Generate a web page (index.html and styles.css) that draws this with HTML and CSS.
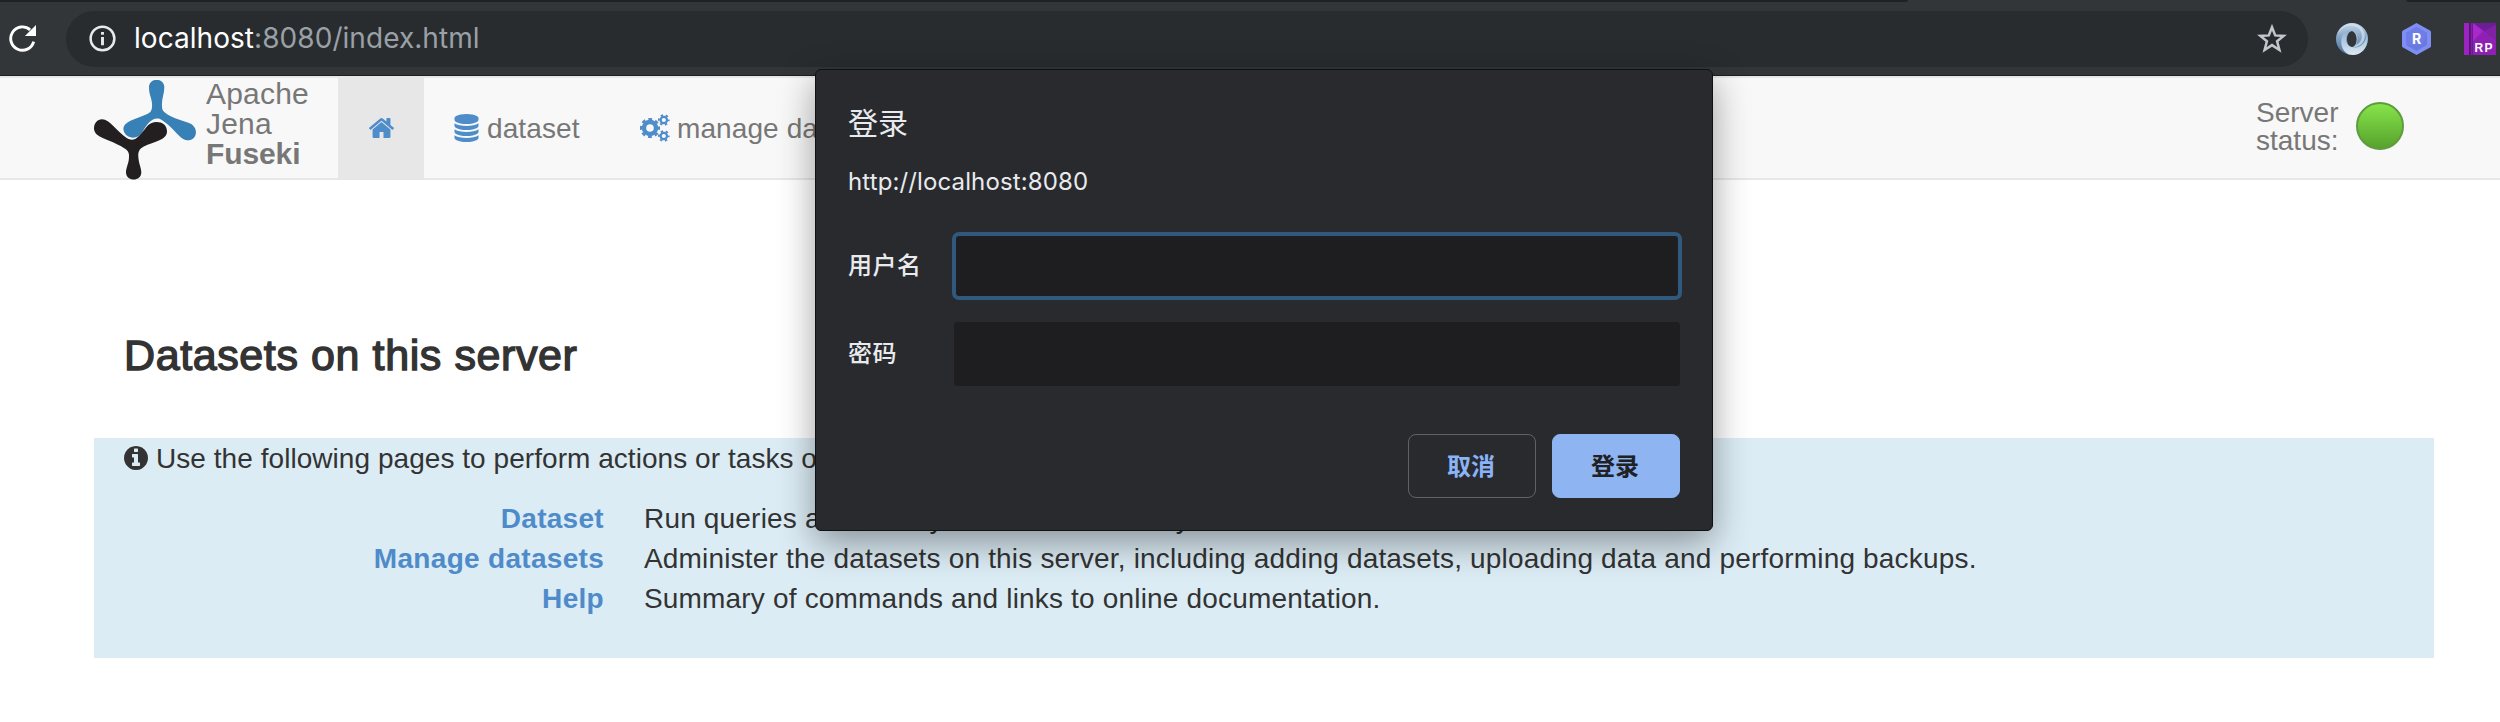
FILE: index.html
```html
<!DOCTYPE html>
<html lang="zh-CN">
<head>
<meta charset="utf-8">
<title>Apache Jena Fuseki</title>
<link rel="stylesheet" href="styles.css">
</head>
<body>
<header class="browser">
  <div class="tab-strip"><i class="tabs-left"></i><i class="tabs-right"></i></div>
  <div class="toolbar">
    <svg class="reload" viewBox="0 0 28 28"><path d="M25.600 17.200 A12.100 12.100 0 1 1 21.900 5" fill="none" stroke="#fff" stroke-width="3"/><path d="M28 0V11.500H16.500Z" fill="#fff"/></svg>
    <div class="omnibox">
      <svg class="site-info" viewBox="0 0 28 28"><circle cx="14" cy="14" r="12.3" fill="none" stroke="#e8eaed" stroke-width="2.6"/><path d="M12.5 7.200h3v3h-3zM12.500 12.400h3v8.600h-3z" fill="#e8eaed"/></svg>
      <span class="url"><b>localhost</b>:8080/index.html</span>
      <svg class="star" viewBox="0 0 30 30"><path d="M15 3.2 L18.2 11.4 L26.7 11.9 L20.1 17.3 L22.4 26 L15 21.1 L7.6 26 L9.9 17.3 L3.3 11.9 L11.8 11.4Z" fill="none" stroke="#c3c6ca" stroke-width="2.5"/></svg>
    </div>
    <svg class="ext ext-ring" viewBox="0 0 32 32">
      <defs><linearGradient id="ringA" x1="0" y1="0" x2="0" y2="1"><stop offset="0" stop-color="#c3d6e8"/><stop offset=".5" stop-color="#7c9fc2"/><stop offset="1" stop-color="#44719f"/></linearGradient>
      <linearGradient id="ringB" x1="0" y1="0" x2="0" y2="1"><stop offset="0" stop-color="#8fb0cf"/><stop offset=".5" stop-color="#b7cde0"/><stop offset="1" stop-color="#dce9f4"/></linearGradient></defs>
      <path fill-rule="evenodd" d="M16 0a16 16 0 1 0 0 32a16 16 0 1 0 0-32zM16 8c3 0 5 4 5 8s-2 8-5 8s-5-4-5-8s2-8 5-8z" fill="url(#ringA)"/>
      <path d="M16 8C8 9 8 23 16 24C24 26 30 20 31 11C34 25 24 34 13 31.500C4 28 3 14 9 9C11 7.500 13 7.500 16 8Z" fill="url(#ringB)"/>
      <path d="M16 8C21 8 23 16 20 22C27 19 28 10 22 5C14 0 6 4 2 11C4 4 10 .5 16 .5C25 1 31 9 28 17C26 22 21 25 17 24C22 22 22 10 16 8Z" fill="#d6e4f0" opacity=".7"/>
    </svg>
    <svg class="ext ext-hex" viewBox="0 0 29 32">
      <path d="M14.500 0L28 7.500Q29 8 29 9V23Q29 24 28 24.500L14.500 32L1 24.500Q0 24 0 23V9Q0 8 1 7.500Z" fill="#7f8ef4"/>
      <path d="M14.500 4L25 10V22L14.500 28L4 22V10Z" fill="#6a79e0"/><path d="M14.500 4L25 10L20 22L4 22V10Z" fill="#6f7ee6"/>
      <text class="hex-letter" x="14.500" y="21.200" text-anchor="middle">R</text>
    </svg>
    <svg class="ext ext-rp" viewBox="0 0 32 32">
      <rect width="32" height="32" fill="#9b23c0"/><path d="M9 0H32V18L20 8Z" fill="#6c1d97"/><path d="M9 0L32 19V32H9Z" fill="#a928cc"/><path d="M32 2V18L20 8Z" fill="#7f22a6"/><path d="M9 18L19 8L32 19V32H9Z" fill="#8f20b3"/><rect x="5" width="1.800" height="32" fill="#54156f"/><rect x="7.500" width="1.500" height="32" fill="#6c1b8c"/>
      <text class="rp-letters" x="10.500" y="28.500" textLength="18">RP</text>
    </svg>
  </div>
</header>

<nav class="navbar">
  <a class="brand">
    <svg class="logo" viewBox="42 30 306 300">
      <path d="M207 52C207 22 253 22 253 52C253 75 242 90 247 118C250 132 290 148 325 158C358 168 354 212 321 211C300 210 275 165 240 147C215 140 200 165 185 190C172 210 135 208 130 178C130 155 160 150 200 133C215 127 217 118 216 100C214 80 207 75 207 52Z" fill="#3881b7"/>
      <path d="M66 148C90 148 110 185 140 204C165 220 180 195 200 170C215 148 262 150 261 185C260 210 225 213 190 230C172 240 174 255 176 270C178 285 184 295 184 307C184 336 138 336 138 307C138 290 148 280 147 255C147 240 130 232 105 220C75 205 42 200 42 175C42 160 52 148 66 148Z" fill="#231f20"/>
    </svg>
    <span class="brand-name">Apache<br>Jena<br><strong>Fuseki</strong></span>
  </a>
  <a class="nav-item nav-home"><svg class="icon-home" viewBox="89 256 1614 1280"><path d="M1472 992v480q0 26-19 45t-45 19h-384v-384h-256v384h-384q-26 0-45-19t-19-45v-480q0-1 .5-3t.5-3l575-474 575 474q1 2 1 6zm223-69l-62 74q-8 9-21 11h-3q-13 0-21-7l-692-577-692 577q-12 8-24 7-13-2-21-11l-62-74q-8-10-7-23.500t11-21.500l719-599q32-26 76-26t76 26l244 204v-195q0-14 9-23t23-9h192q14 0 23 9t9 23v408l219 182q10 8 11 21.500t-7 23.500z"/></svg></a>
  <a class="nav-item nav-dataset"><svg class="icon-db" viewBox="128 0 1536 1792"><path d="M896 768q237 0 443-43t325-127v170q0 69-103 128t-280 93.500-385 34.500-385-34.500-280-93.500-103-128v-170q119 84 325 127t443 43zm0 768q237 0 443-43t325-127v170q0 69-103 128t-280 93.500-385 34.500-385-34.500-280-93.500-103-128v-170q119 84 325 127t443 43zm0-384q237 0 443-43t325-127v170q0 69-103 128t-280 93.500-385 34.500-385-34.500-280-93.500-103-128v-170q119 84 325 127t443 43zm0-1152q208 0 385 34.500t280 93.500 103 128v128q0 69-103 128t-280 93.500-385 34.500-385-34.500-280-93.500-103-128v-128q0-69 103-128t280-93.500 385-34.500z"/></svg><span>dataset</span></a>
  <a class="nav-item nav-manage"><svg class="icon-cogs" viewBox="0 0 30 28">
    <circle cx="10" cy="14" r="6" stroke-width="4.400"/><circle cx="10" cy="14" r="8.900" stroke-width="2.400" stroke-dasharray="3.800 3.190" stroke-dashoffset="1.900"/>
    <circle cx="23.800" cy="6" r="3.200" stroke-width="2.200"/><circle cx="23.800" cy="6" r="4.900" stroke-width="1.900" stroke-dasharray="2.400 2.730" stroke-dashoffset="1.200"/>
    <circle cx="23.800" cy="22" r="3.200" stroke-width="2.200"/><circle cx="23.800" cy="22" r="4.900" stroke-width="1.900" stroke-dasharray="2.400 2.730" stroke-dashoffset="1.200"/>
  </svg><span>manage datasets</span></a>
  <div class="server-status"><span>Server<br>status:</span><i class="status-light"></i></div>
</nav>

<main class="content">
  <h2 class="title">Datasets on this server</h2>
  <section class="panel">
    <p class="intro"><svg class="icon-info" viewBox="128 128 1536 1536"><path d="M1152 1376v-160q0-14-9-23t-23-9h-96v-512q0-14-9-23t-23-9h-320q-14 0-23 9t-9 23v160q0 14 9 23t23 9h96v320h-96q-14 0-23 9t-9 23v160q0 14 9 23t23 9h448q14 0 23-9t9-23zm-128-896v-160q0-14-9-23t-23-9h-192q-14 0-23 9t-9 23v160q0 14 9 23t23 9h192q14 0 23-9t9-23zm640 416q0 209-103 385.500t-279.500 279.500-385.500 103-385.500-103-279.500-279.500-103-385.500 103-385.500 279.500-279.500 385.500-103 385.500 103 279.500 279.500 103 385.500z"/></svg><span>Use the following pages to perform actions or tasks on this server:</span></p>
    <dl class="actions">
      <dt>Dataset</dt><dd>Run queries and modify datasets hosted by this server.</dd>
      <dt>Manage datasets</dt><dd>Administer the datasets on this server, including adding datasets, uploading data and performing backups.</dd>
      <dt>Help</dt><dd>Summary of commands and links to online documentation.</dd>
    </dl>
  </section>
</main>

<div class="dialog" role="dialog">
  <div class="dialog-title">登录</div>
  <div class="dialog-origin">http://localhost:8080</div>
  <label class="field"><span>用户名</span><input class="focused" type="text"></label>
  <label class="field"><span>密码</span><input type="password"></label>
  <div class="buttons"><button class="cancel">取消</button><button class="login">登录</button></div>
</div>
</body>
</html>
```
FILE: styles.css
```css
* { box-sizing: border-box; }
body {
  margin: 0;
  width: 2500px;
  height: 722px;
  overflow: hidden;
  background: #fff;
  color: #333;
  font: 28px/40px "Liberation Sans", Arial, sans-serif;
  white-space: nowrap;
}
svg { display: block; flex: none; }

.browser { height: 76px; background: #323639; border-bottom: 1px solid #231b20; }
.tab-strip { display: flex; justify-content: space-between; height: 2px; }
.tabs-left { width: 1908px; background: #202124; border-bottom-right-radius: 4px 2px; }
.tabs-right { width: 94px; background: #202124; border-bottom-left-radius: 4px 2px; }
.toolbar { display: flex; align-items: center; height: 73px; padding-left: 9px; }
.reload { width: 27px; height: 27px; margin-right: 30px; }
.omnibox {
  display: flex;
  align-items: center;
  width: 2242px;
  height: 56px;
  padding: 0 21px 0 23px;
  border-radius: 28px;
  background: #282c2f;
}
.site-info { width: 27px; height: 27px; margin-right: 18px; }
.url { flex: 1; font: 28px/55px Inter, "Open Sans", sans-serif; color: #9aa0a6; padding-bottom: 1px; letter-spacing: 0.05px; }
.url b { font-weight: 400; color: #fff; }
.star { width: 30px; height: 30px; }
.ext { height: 32px; }
.ext-ring { width: 32px; margin-left: 28px; }
.ext-hex { width: 29px; margin-left: 34px; }
.ext-rp { width: 32px; margin-left: 33px; }
.hex-letter { font: 700 14px Inter, sans-serif; fill: #fff; }
.rp-letters { font: 700 12px "Liberation Sans", sans-serif; fill: #fff; }

.navbar {
  display: flex;
  height: 104px;
  padding-left: 94px;
  border-top: 2px solid #e7e7e7;
  border-bottom: 2px solid #e7e7e7;
  background: #f8f8f8;
  color: #777;
}
.brand { display: flex; width: 244px; height: 102px; }
.logo { width: 102px; height: 100px; margin: 2px 10px 0 0; }
.brand-name { padding-top: 1px; font-size: 30px; line-height: 30px; letter-spacing: 0.2px; }
.brand-name strong { letter-spacing: -0.1px; }
.nav-item { display: flex; align-items: center; height: 100px; }
.nav-item span { padding-top: 2px; letter-spacing: 0.1px; }
.nav-item path { fill: #4f8cca; }
.nav-home { width: 86px; padding-left: 31px; background: #e7e7e7; }
.icon-home { width: 25px; height: 20px; }
.nav-dataset { padding-left: 30px; width: 216px; }
.icon-db { width: 25px; height: 28px; margin-right: 8px; }
/* the bar's last visible item is cut off by the dialog edge */
.nav-manage { width: 175px; overflow: hidden; }
.icon-cogs { width: 30px; height: 28px; margin-right: 7px; fill: none; stroke: #4f8cca; }
.server-status {
  display: flex;
  align-items: flex-start;
  justify-content: space-between;
  width: 148px;
  margin: 18px 96px 0 auto;
  line-height: 28px;
}
.server-status span { padding-top: 3px; }
.status-light {
  width: 48px;
  height: 48px;
  margin-top: 6px;
  border: 2px solid #5f9c3e;
  border-radius: 50%;
  background: linear-gradient(#86e449, #57a22e);
}

.content { padding: 148px 66px 0 94px; }
.title {
  margin: 0 0 55px;
  padding-left: 30px;
  font-size: 43px;
  line-height: 55px;
  font-weight: 400;
  letter-spacing: 0.6px;
  -webkit-text-stroke: 1.4px #333;
}
.panel { height: 220px; padding-bottom: 40px; background: #dcecf5; }
.intro { display: flex; align-items: center; margin: 0 0 20px; padding-left: 30px; }
.intro span { padding-top: 1px; margin-bottom: -1px; letter-spacing: 0.05px; }
.icon-info { width: 24px; height: 24px; margin-right: 8px; fill: #333; }
.actions { display: grid; grid-template-columns: 510px auto; column-gap: 40px; margin: 0; padding-top: 1px; letter-spacing: 0.18px; }
.actions dt { text-align: right; font-weight: 700; color: #4f8bc9; letter-spacing: 0.3px; }
.actions dd { margin: 0; }

.dialog {
  position: absolute;
  left: 815px;
  top: 69px;
  width: 898px;
  height: 462px;
  padding: 30px 32px 32px;
  border: 1px solid #101113;
  border-radius: 6px;
  background: #292a2d;
  color: #e8eaed;
  font: 24px/32px Inter, "Noto Sans CJK SC", sans-serif;
  box-shadow: 0 12px 36px rgba(0, 0, 0, 0.38);
}
.dialog-title { height: 46px; font: 30px/42px "Noto Sans CJK SC", sans-serif; }
.dialog-origin { height: 32px; margin-top: 20px; letter-spacing: 0.12px; }
.field { display: flex; align-items: center; height: 64px; margin-top: 24px; }
.field:nth-of-type(1) { margin-top: 36px; }
.field span { width: 106px; letter-spacing: 0.5px; font-weight: 500; }
.field input {
  width: 726px;
  height: 64px;
  padding: 0 16px;
  border: 0;
  border-radius: 4px;
  outline: 0;
  background: #1e1e20;
}
.field input.focused { border: 2px solid #31597d; border-radius: 5px; box-shadow: 0 0 0 2px #31597d; }
.buttons { display: flex; justify-content: flex-end; gap: 16px; margin-top: 48px; }
.buttons button {
  width: 128px;
  height: 64px;
  padding: 0 2px 2px 0;
  border: 1px solid #5f6368;
  border-radius: 8px;
  background: transparent;
  color: #8ab4f8;
  font: 700 24px/60px "Noto Sans CJK SC", sans-serif;
}
.buttons .login { border-color: #8fb4f2; background: #8fb4f2; color: #202124; }
```
